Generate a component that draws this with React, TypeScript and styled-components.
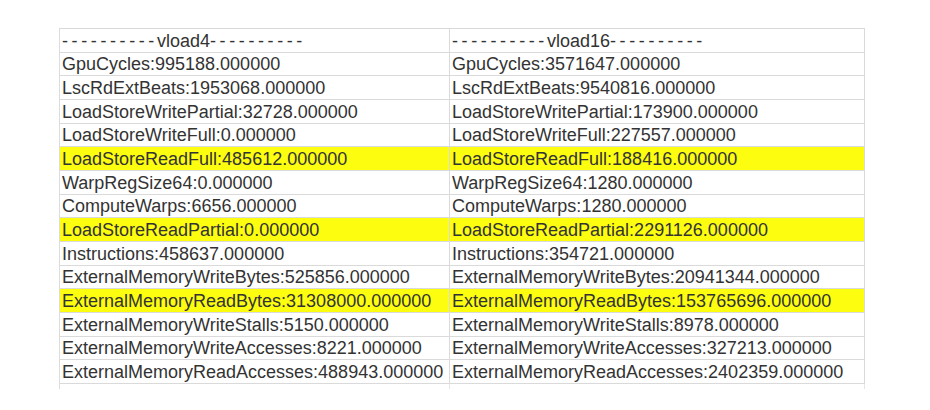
import React from 'react'
import styled, { createGlobalStyle } from 'styled-components'

const GlobalStyle = createGlobalStyle`
    html, body {
        margin: 0;
        padding: 0;
        background: #ffffff;
    }
`

const Page = styled.div`
    width: 930px;
    height: 410px;
    padding: 28px 0 0 59px;
    box-sizing: border-box;
    background: #ffffff;
    font-family: "Liberation Sans", Arial, sans-serif;
`

interface SheetProps {
    $rowCount: number
}

const Sheet = styled.div<SheetProps>`
    display: grid;
    grid-template-columns: 390px 415px;
    grid-template-rows: repeat(${ props => props.$rowCount }, 23.667px) 5px;
    border-top: 1px solid #d9d9d9;
    border-left: 1px solid #dcdcdc;
    width: max-content;
`

interface CellProps {
    $marked?: boolean
}

const Cell = styled.div<CellProps>`
    display: flex;
    align-items: flex-end;
    box-sizing: border-box;
    padding: 0 0 1px 2px;
    border-right: 1px solid #dadada;
    border-bottom: 1px solid #dadada;
    background: ${ props => props.$marked ? '#fdfd10' : '#ffffff' };
    color: #333333;
    font-size: 18px;
    line-height: 20px;
    white-space: nowrap;
    overflow: hidden;
`

const TailCell = styled.div`
    border-right: 1px solid #e6e6e6;
`

const Dashes = styled.span`
    letter-spacing: 3.6px;
    margin-right: -1px;
`

const rows: { left: string, right: string, marked?: boolean }[] = [
    { left: 'GpuCycles:995188.000000', right: 'GpuCycles:3571647.000000' },
    { left: 'LscRdExtBeats:1953068.000000', right: 'LscRdExtBeats:9540816.000000' },
    { left: 'LoadStoreWritePartial:32728.000000', right: 'LoadStoreWritePartial:173900.000000' },
    { left: 'LoadStoreWriteFull:0.000000', right: 'LoadStoreWriteFull:227557.000000' },
    { left: 'LoadStoreReadFull:485612.000000', right: 'LoadStoreReadFull:188416.000000', marked: true },
    { left: 'WarpRegSize64:0.000000', right: 'WarpRegSize64:1280.000000' },
    { left: 'ComputeWarps:6656.000000', right: 'ComputeWarps:1280.000000' },
    { left: 'LoadStoreReadPartial:0.000000', right: 'LoadStoreReadPartial:2291126.000000', marked: true },
    { left: 'Instructions:458637.000000', right: 'Instructions:354721.000000' },
    { left: 'ExternalMemoryWriteBytes:525856.000000', right: 'ExternalMemoryWriteBytes:20941344.000000' },
    { left: 'ExternalMemoryReadBytes:31308000.000000', right: 'ExternalMemoryReadBytes:153765696.000000', marked: true },
    { left: 'ExternalMemoryWriteStalls:5150.000000', right: 'ExternalMemoryWriteStalls:8978.000000' },
    { left: 'ExternalMemoryWriteAccesses:8221.000000', right: 'ExternalMemoryWriteAccesses:327213.000000' },
    { left: 'ExternalMemoryReadAccesses:488943.000000', right: 'ExternalMemoryReadAccesses:2402359.000000' },
]

const Header: React.FC<{ name: string }> = ({ name }) => (
    <Cell>
        <Dashes>----------</Dashes>{ name }<Dashes>----------</Dashes>
    </Cell>
)

const App: React.FC = () => {
    return (
        <>
            <GlobalStyle />
            <Page>
                <Sheet $rowCount={ rows.length + 1 }>
                    <Header name="vload4" />
                    <Header name="vload16" />
                    {
                        rows.map((row, index) =>
                            <React.Fragment key={ index }>
                                <Cell $marked={ row.marked }>{ row.left }</Cell>
                                <Cell $marked={ row.marked }>{ row.right }</Cell>
                            </React.Fragment>
                        )
                    }
                    <TailCell />
                    <TailCell />
                </Sheet>
            </Page>
        </>
    )
}

export default App
